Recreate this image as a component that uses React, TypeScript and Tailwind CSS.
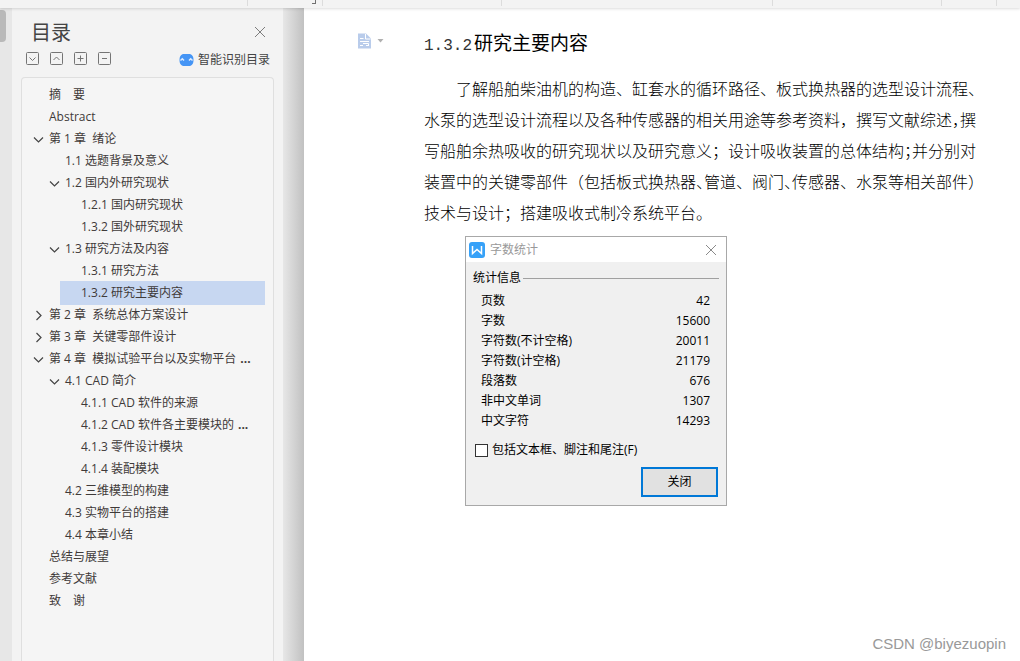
import React, { useState } from "react";

type OutlineItem = {
  level: 0 | 1 | 2;
  text: string;
  open?: boolean;
  cut?: boolean;
};

const outline: OutlineItem[] = [
  { level: 0, text: "摘　要" },
  { level: 0, text: "Abstract" },
  { level: 0, text: "第 1 章  绪论", open: true },
  { level: 1, text: "1.1 选题背景及意义" },
  { level: 1, text: "1.2 国内外研究现状", open: true },
  { level: 2, text: "1.2.1 国内研究现状" },
  { level: 2, text: "1.3.2 国外研究现状" },
  { level: 1, text: "1.3 研究方法及内容", open: true },
  { level: 2, text: "1.3.1 研究方法" },
  { level: 2, text: "1.3.2 研究主要内容" },
  { level: 0, text: "第 2 章  系统总体方案设计", open: false },
  { level: 0, text: "第 3 章  关键零部件设计", open: false },
  { level: 0, text: "第 4 章  模拟试验平台以及实物平台", open: true, cut: true },
  { level: 1, text: "4.1 CAD 简介", open: true },
  { level: 2, text: "4.1.1 CAD 软件的来源" },
  { level: 2, text: "4.1.2 CAD 软件各主要模块的", cut: true },
  { level: 2, text: "4.1.3 零件设计模块" },
  { level: 2, text: "4.1.4 装配模块" },
  { level: 1, text: "4.2 三维模型的构建" },
  { level: 1, text: "4.3 实物平台的搭建" },
  { level: 1, text: "4.4 本章小结" },
  { level: 0, text: "总结与展望" },
  { level: 0, text: "参考文献" },
  { level: 0, text: "致　谢" },
];

const indents = ["ml-0", "ml-4", "ml-8"];

const stats = [
  ["页数", "42"],
  ["字数", "15600"],
  ["字符数(不计空格)", "20011"],
  ["字符数(计空格)", "21179"],
  ["段落数", "676"],
  ["非中文单词", "1307"],
  ["中文字符", "14293"],
];

const tools = [
  { label: "全部展开", path: "M3.5 5.5L6.5 8.5L9.5 5.5" },
  { label: "全部收起", path: "M3.5 8L6.5 5L9.5 8" },
  { label: "展开一级", path: "M3.5 6.5H9.5M6.5 3.5V9.5" },
  { label: "收起一级", path: "M4 6.5H9" },
];

const CloseIcon = () => (
  <svg width="12" height="12" viewBox="0 0 12 12" fill="none" stroke="currentColor">
    <path d="M1 1L11 11M11 1L1 11" />
  </svg>
);

// Half-width punctuation, as the word processor sets it in full lines
const Half = ({ children }: { children: React.ReactNode }) => (
  <span className="[font-feature-settings:'halt']">{children}</span>
);

const Ruler = () => (
  <div className="relative z-10 flex h-2 shrink-0 bg-[#f3f3f3] shadow-[0_1px_3px_rgba(0,0,0,0.14)]">
    <div className="h-1.5 w-[248px] border-r border-[#dcdcdc]" />
    <div className="flex h-1.5 w-[75px] justify-end border-r border-[#dcdcdc] pr-1.5">
      <div className="h-1 w-1 border-r border-b border-[#707070]" />
    </div>
    <div className="h-1.5 w-[179px] border-r border-[#dcdcdc]" />
    <div className="h-1.5 w-[271px] border-r border-[#dcdcdc]" />
    <div className="h-1.5 w-[169px] border-r border-[#dcdcdc]" />
    <div className="h-1.5 w-[55px] border-r border-[#dcdcdc]" />
  </div>
);

const OutlinePanel = () => {
  const [selected, setSelected] = useState(9);

  return (
    <aside className="flex w-[271px] shrink-0 flex-col bg-[#f3f3f3] px-[9px] text-[#3f3a39]">
      <div className="flex h-11 items-center justify-between pl-2.5 pr-1 pt-1.5">
        <h1 className="text-xl text-[#444]">目录</h1>
        <button aria-label="关闭目录" className="flex h-5 w-5 items-center justify-center pb-0.5 text-[#7d7d7d]">
          <CloseIcon />
        </button>
      </div>

      <div className="flex h-[25px] items-start justify-between pl-[5px] pr-1">
        <div className="flex gap-[11px]">
          {tools.map((tool) => (
            <button key={tool.label} aria-label={tool.label} className="h-[13px] w-[13px]">
              <svg width="13" height="13" viewBox="0 0 13 13" fill="none" stroke="#757575">
                <rect x="0.5" y="0.5" width="12" height="12" rx="1" />
                <path d={tool.path} />
              </svg>
            </button>
          ))}
        </div>
        <button className="flex h-4 items-center gap-1 text-xs text-[#444]">
          <svg width="15" height="12" viewBox="0 0 15 12">
            <path
              d="M5 0H10C13 0 14.5 2.5 14.5 6S13 12 10 12H5C2 12 .5 9.5 .5 6S2 0 5 0Z"
              fill="#4595f5"
            />
            <path
              d="M1.5 6.5L3.3 4.8L5 6.5M10 6.5L11.7 4.8L13.5 6.5"
              fill="none"
              stroke="#dcebff"
              strokeWidth="1.5"
            />
          </svg>
          智能识别目录
        </button>
      </div>

      <nav className="flex-1 rounded-t border border-b-0 border-[#dfdfdf] bg-[#f5f5f5] pb-10 pl-1.5 pr-2 pt-1.5">
        <ul>
          {outline.map((item, i) => (
            <li key={i} className={indents[item.level]}>
              <button
                onClick={() => setSelected(i)}
                className={
                  "flex w-full items-center text-left text-xs whitespace-pre " +
                  (selected === i ? "-my-px h-6 bg-[#c7d7f1]" : "h-[22px]")
                }
              >
                <span className="flex w-[21px] shrink-0 justify-center">
                  {item.open !== undefined && (
                    <svg width="11" height="11" viewBox="0 0 11 11" fill="none" stroke="#444" strokeWidth="1.2">
                      <path d={item.open ? "M1 3.5L5.5 8L10 3.5" : "M3.5 1L8 5.5L3.5 10"} />
                    </svg>
                  )}
                </span>
                {item.text}
                {item.cut && <b className="pl-1">...</b>}
              </button>
            </li>
          ))}
        </ul>
      </nav>
    </aside>
  );
};

const CountDialog = () => (
  <section
    role="dialog"
    aria-label="字数统计"
    className="w-[262px] border border-[#a8a8a8] bg-[#f0f0f0] text-xs text-black"
  >
    <header className="flex h-[25px] items-center bg-white pl-[3px] pr-[9px]">
      <svg width="16" height="16" viewBox="0 0 16 16">
        <rect width="16" height="16" rx="3" fill="#36a1f8" />
        <path d="M3.5 4V11.5L8 7.5L12.500 11.500V4" fill="none" stroke="#fff" strokeWidth="1.5" />
      </svg>
      <h2 className="flex-1 pl-[5px] text-[#999]">字数统计</h2>
      <button aria-label="关闭窗口" className="text-[#8a8a8a]">
        <CloseIcon />
      </button>
    </header>

    <div className="px-[7px] pb-2 pt-1.5">
      <div className="flex h-5 items-center gap-0.5">
        <h3>统计信息</h3>
        <div className="h-px flex-1 bg-[#a0a0a0]" />
      </div>
      <table className="mt-[3px] w-full">
        <tbody>
          {stats.map(([name, value]) => (
            <tr key={name} className="h-5">
              <th scope="row" className="p-0 pl-2 text-left font-normal">{name}</th>
              <td className="p-0 pr-[9px] text-right">{value}</td>
            </tr>
          ))}
        </tbody>
      </table>
      <label className="mt-[7px] flex h-6 items-center gap-1 pl-0.5">
        <input
          type="checkbox"
          className="h-[13px] w-[13px] appearance-none border border-[#333] bg-white checked:bg-[#0078d7]"
        />
        包括文本框、脚注和尾注(F)
      </label>
      <div className="mt-[5px] flex justify-end pr-px">
        <button className="h-[30px] w-[77px] border-2 border-[#0078d7] bg-[#e1e1e1]">关闭</button>
      </div>
    </div>
  </section>
);

const App = () => {
  return (
    <div className="relative flex min-h-screen flex-col overflow-hidden bg-white font-['Open_Sans','Noto_Sans_CJK_SC',sans-serif]">
      <Ruler />

      <div className="flex flex-1">
        <div className="w-3 shrink-0 bg-[#e7e7e7] pt-0.5">
          <div className="h-8 w-1.5 rounded-r bg-[#b9b9b9]" />
        </div>
        <OutlinePanel />
        <div className="w-[21px] shrink-0 bg-linear-to-r from-[#e7e7e7] to-[#c1c1c1]" />

        <main className="flex flex-1 items-start pl-[54px] pt-5 text-black">
          <button aria-label="段落布局" className="mt-[5px] flex w-[66px] shrink-0 items-center gap-1.5">
            <svg width="13" height="16" viewBox="0 0 13 16">
              <path d="M0 .5H8L13 5.5V15.5H0Z" fill="#b9cceb" />
              <path d="M7.5 1V6H12.5" fill="none" stroke="#fff" />
              <path d="M2 5.5H5.5M2 8.5H11M2 12.5H5M8 12.5H11M5 10.5H10.5V12.5" fill="none" stroke="#fff" />
            </svg>
            <svg width="7" height="4" viewBox="0 0 7 4">
              <path d="M.5 0H6.5L3.5 3.5Z" fill="#b0b0b0" />
            </svg>
          </button>

          <article className="w-[554px] font-['Noto_Sans_CJK_SC',sans-serif]">
            <h2 className="flex h-7 items-baseline text-[19px]/7 font-normal">
              <span className="w-[50px] font-['Liberation_Mono',monospace] text-base text-[#333]">1.3.2</span>
              研究主要内容
            </h2>
            <p className="mt-[17px] text-base/[31px] font-light whitespace-nowrap">
              <span className="block pl-8">了解船舶柴油机的构造、缸套水的循环路径、板式换热器的选型设计流程、</span>
              <span className="block">
                水泵的选型设计流程以及各种传感器的相关用途等参考资料，撰写文献综述<Half>，</Half>撰
              </span>
              <span className="block">
                写船舶余热吸收的研究现状以及研究意义；设计吸收装置的总体结构<Half>；</Half>并分别对
              </span>
              <span className="block">
                装置中的关键零部件（包括板式换热器<Half>、</Half>管道、阀门<Half>、</Half>传感器、水泵等相关部件<Half>）</Half>
              </span>
              <span className="block">技术与设计；搭建吸收式制冷系统平台。</span>
            </p>
            <div className="ml-[41px] mt-2 font-['Open_Sans','Noto_Sans_CJK_SC',sans-serif]">
              <CountDialog />
            </div>
          </article>
        </main>
      </div>

      <p className="absolute bottom-1.5 right-3.5 font-['Liberation_Sans',sans-serif] text-[15px] text-[#999]">
        CSDN @biyezuopin
      </p>
    </div>
  );
};

export default App;
